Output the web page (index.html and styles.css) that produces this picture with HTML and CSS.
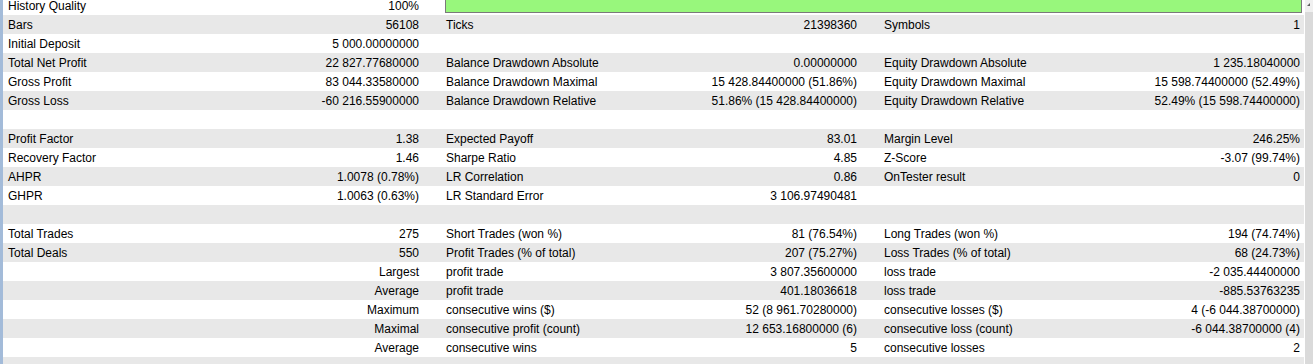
FILE: index.html
```html
<!DOCTYPE html>
<html>
<head>
<meta charset="utf-8">
<link rel="stylesheet" href="styles.css">
</head>
<body>
<div class="frame">
  <div class="edge"></div>
  <div class="report">
    <div class="row"><span class="lbl">History Quality</span><span class="val">100%</span><div class="quality"></div></div>
    <div class="row"><span class="lbl">Bars</span><span class="val">56108</span><span class="lbl">Ticks</span><span class="val">21398360</span><span class="lbl">Symbols</span><span class="val">1</span></div>
    <div class="row"><span class="lbl">Initial Deposit</span><span class="val">5 000.00000000</span><span></span><span></span><span></span><span></span></div>
    <div class="row"><span class="lbl">Total Net Profit</span><span class="val">22 827.77680000</span><span class="lbl">Balance Drawdown Absolute</span><span class="val">0.00000000</span><span class="lbl">Equity Drawdown Absolute</span><span class="val">1 235.18040000</span></div>
    <div class="row"><span class="lbl">Gross Profit</span><span class="val">83 044.33580000</span><span class="lbl">Balance Drawdown Maximal</span><span class="val">15 428.84400000 (51.86%)</span><span class="lbl">Equity Drawdown Maximal</span><span class="val">15 598.74400000 (52.49%)</span></div>
    <div class="row"><span class="lbl">Gross Loss</span><span class="val">-60 216.55900000</span><span class="lbl">Balance Drawdown Relative</span><span class="val">51.86% (15 428.84400000)</span><span class="lbl">Equity Drawdown Relative</span><span class="val">52.49% (15 598.74400000)</span></div>
    <div class="row"></div>
    <div class="row"><span class="lbl">Profit Factor</span><span class="val">1.38</span><span class="lbl">Expected Payoff</span><span class="val">83.01</span><span class="lbl">Margin Level</span><span class="val">246.25%</span></div>
    <div class="row"><span class="lbl">Recovery Factor</span><span class="val">1.46</span><span class="lbl">Sharpe Ratio</span><span class="val">4.85</span><span class="lbl">Z-Score</span><span class="val">-3.07 (99.74%)</span></div>
    <div class="row"><span class="lbl">AHPR</span><span class="val">1.0078 (0.78%)</span><span class="lbl">LR Correlation</span><span class="val">0.86</span><span class="lbl">OnTester result</span><span class="val">0</span></div>
    <div class="row"><span class="lbl">GHPR</span><span class="val">1.0063 (0.63%)</span><span class="lbl">LR Standard Error</span><span class="val">3 106.97490481</span><span></span><span></span></div>
    <div class="row"></div>
    <div class="row"><span class="lbl">Total Trades</span><span class="val">275</span><span class="lbl">Short Trades (won %)</span><span class="val">81 (76.54%)</span><span class="lbl">Long Trades (won %)</span><span class="val">194 (74.74%)</span></div>
    <div class="row"><span class="lbl">Total Deals</span><span class="val">550</span><span class="lbl">Profit Trades (% of total)</span><span class="val">207 (75.27%)</span><span class="lbl">Loss Trades (% of total)</span><span class="val">68 (24.73%)</span></div>
    <div class="row"><span class="lbl"></span><span class="val">Largest</span><span class="lbl">profit trade</span><span class="val">3 807.35600000</span><span class="lbl">loss trade</span><span class="val">-2 035.44400000</span></div>
    <div class="row"><span class="lbl"></span><span class="val">Average</span><span class="lbl">profit trade</span><span class="val">401.18036618</span><span class="lbl">loss trade</span><span class="val">-885.53763235</span></div>
    <div class="row"><span class="lbl"></span><span class="val">Maximum</span><span class="lbl">consecutive wins ($)</span><span class="val">52 (8 961.70280000)</span><span class="lbl">consecutive losses ($)</span><span class="val">4 (-6 044.38700000)</span></div>
    <div class="row"><span class="lbl"></span><span class="val">Maximal</span><span class="lbl">consecutive profit (count)</span><span class="val">12 653.16800000 (6)</span><span class="lbl">consecutive loss (count)</span><span class="val">-6 044.38700000 (4)</span></div>
    <div class="row"><span class="lbl"></span><span class="val">Average</span><span class="lbl">consecutive wins</span><span class="val">5</span><span class="lbl">consecutive losses</span><span class="val">2</span></div>
    <div class="row"></div>
  </div>
  <div class="scrollbar">
    <div class="arrow"></div>
    <div class="thumb"></div>
  </div>
</div>
</body>
</html>
```

FILE: styles.css
```css
html, body {
  margin: 0;
  padding: 0;
  background: #ffffff;
  overflow: hidden;
}
body {
  font-family: "Liberation Sans", Arial, sans-serif;
  font-size: 12px;
  color: #000000;
}
.frame {
  display: flex;
  height: 364px;
  overflow: hidden;
}
.edge {
  width: 3px;
  flex: none;
  background: #a3bbd9;
}
.report {
  flex: 1;
  margin-top: -4px;
  margin-right: 1px;
}
.row {
  display: grid;
  grid-template-columns: 184px 200px 184px 200px 184px 205px;
  grid-template-rows: 19px;
  column-gap: 27px;
  height: 19px;
  line-height: 19px;
  padding-left: 5px;
  white-space: nowrap;
}
.row:nth-child(even) {
  background: #e8e8e8;
}
.lbl, .val {
  padding-top: 1px;
}
.val {
  text-align: right;
}
.quality {
  grid-column: 3 / 7;
  margin: 1px -2px 2px -1px;
  background: #98f77c;
  border: 1px solid #7a7a7a;
  border-top: none;
}
.scrollbar {
  width: 8px;
  flex: none;
  background: #f0f0f0;
  display: flex;
  flex-direction: column;
}
.arrow {
  height: 12px;
  position: relative;
}
.arrow::before {
  content: "";
  position: absolute;
  left: 2px;
  top: 3px;
  width: 0;
  height: 0;
  border-left: 3px solid transparent;
  border-bottom: 3px solid #606060;
}
.thumb {
  flex: 1;
  background: #dadada;
}
```
